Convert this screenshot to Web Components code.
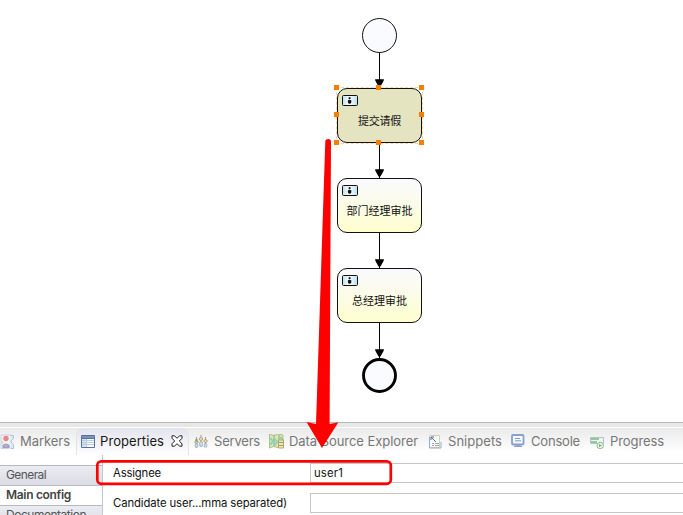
<!DOCTYPE html>
<html lang="zh"><head><meta charset="utf-8"><title>Process editor</title>
<style>html,body{margin:0;height:515px;overflow:hidden;background:#fff}</style></head>
<body><process-editor></process-editor>
<script>
const define=(name,html,after)=>customElements.define(name,class extends HTMLElement{
  connectedCallback(){
    if(this.shadowRoot)return;
    const t=document.createElement('template');t.innerHTML=html;
    this.attachShadow({mode:'open'}).append(t.content.cloneNode(true));
    if(after)after(this,this.shadowRoot);
  }
});

/* Text that spreads its letters to an intended width */
define('fit-label',`<style>:host{display:inline-block;white-space:nowrap}span{display:inline-block}</style><span></span>`,(h,r)=>{
  const s=r.querySelector('span');s.textContent=h.getAttribute('text');
  const w=+h.getAttribute('w');
  s.style.letterSpacing=((w-s.getBoundingClientRect().width)/s.textContent.length)+'px';
  h.style.width=w+'px';
});

define('flow-task',`<style>
:host{position:absolute;left:337px;width:83px;height:53px;box-sizing:content-box;border:1px solid #111;border-radius:10px;background:linear-gradient(#fafaff,#fefece);font:11px/14px "Noto Sans CJK SC",sans-serif;color:#111}
:host([selected]){background:#e5e4c1}
svg{position:absolute;left:4px;top:6px}
.t{position:absolute;left:0;right:0;top:24px;text-align:center}
i{position:absolute;width:5px;height:5px;background:#f77f00;display:none}
.f{position:absolute;inset:-2px;border:1px dashed #fbd3a8;display:none}
:host([selected]) i,:host([selected]) .f{display:block}
</style>
<svg width="16" height="12"><defs><linearGradient id="g"><stop stop-color="#b8e2f2"/><stop offset=".45" stop-color="#fff"/><stop offset="1" stop-color="#b8dff5"/></linearGradient></defs><rect x=".5" y=".5" width="15" height="10" rx="1" fill="url(#g)" stroke="#111" stroke-width="1"/><circle cx="7.6" cy="3.2" r="1.1" fill="#15202a"/><path d="M5.8 5.6q1.8-1.5 3.6 0l-.2 2L8.4 8.8H6.8L6 7.6z" fill="#111"/></svg>
<div class="t"></div><div class="f"></div>
<i style="left:-4px;top:-4px"></i><i style="left:38px;top:-4px"></i><i style="left:81px;top:-4px"></i><i style="left:-4px;top:23px"></i><i style="left:81px;top:23px"></i><i style="left:-4px;top:51px"></i><i style="left:38px;top:51px"></i><i style="left:81px;top:51px"></i>`,
(h,r)=>{h.style.top=h.getAttribute('y')+'px';const l=document.createElement('fit-label');l.setAttribute('text',h.getAttribute('name'));l.setAttribute('w',h.getAttribute('w'));r.querySelector('.t').append(l)});

define('flow-canvas',`<style>:host{display:block;position:relative;height:422px;background:#fff}svg.e{position:absolute;left:0;top:0}</style>
<svg class="e" width="683" height="422"><g stroke="#000" stroke-width="1"><path d="M379.5 52v36M379.5 143v35M379.5 233v35M379.5 323v36"/></g>
<g fill="#000"><path id="a" d="M375.3 79q2 .6 4.2 0 2.2.6 4.2 0v1.8l-3.2 5.7h-2l-3.2-5.7z"/><use href="#a" y="90"/><use href="#a" y="180"/><use href="#a" y="270"/></g>
<circle cx="379.5" cy="35.5" r="17" fill="#fafbff" stroke="#111" stroke-width="1"/><circle cx="379.5" cy="375.5" r="16" fill="#fafbff" stroke="#000" stroke-width="2.9"/></svg>
<flow-task y="88" name="提交请假" w="43" selected></flow-task><flow-task y="178" name="部门经理审批" w="66"></flow-task><flow-task y="268" name="总经理审批" w="55"></flow-task>`);

const icons={
markers:`<path d="M1 1h10.5v11L9 14.5H1z" fill="#f0f2fa" stroke="#c9d2e2"/><path d="M10.5 1.5h3v3l-3 3 3 3v4h-3" fill="#dbe9f7" stroke="#afc4d9"/><circle cx="6" cy="4.5" r="2.7" fill="#e98787"/><path d="m1.5 7 1.5 1.5L1.5 10" fill="none" stroke="#e3c795"/><path d="M2.5 14V11q3.5-3 7 0v3z" fill="#85a8d1"/><path d="M4.5 13v-2q1.5-1 3 0v2z" fill="#e7a1a1"/>`,
properties:`<path d="M.5 1.5h13v12H.5z" fill="#fff" stroke="#56739e"/><path d="M1 2h12v2H1z" fill="#7794bd"/><path d="M1 5h4v8H1z" fill="#d7e4f3"/><path d="M5.5 4v9M1 6.5h12M1 8.5h12M1 10.5h12" stroke="#b9cbe0"/><path d="M.5 4.5h13" stroke="#56739e"/>`,
servers:`<path d="M2.5 3v11M7 1v12M11.5 3v10" stroke="#98aabc" stroke-width="1.2"/><path d="M1 7h3v2H1zM5.5 4h3v2h-3zM10 6h3v2h-3z" fill="#fff" stroke="#bb8e48" stroke-width=".8"/><path d="M1.2 10h2.6v3H1.2zM5.7 8h2.6v4H5.7zM10.2 10h2.6v3h-2.6z" fill="#d6e5f0" stroke="#8ba8c0" stroke-width=".7"/><path d="M2.5 5v2.5" stroke="#6da36f" stroke-width="2"/>`,
data:`<path d="m.5 0 4 1.5L9 0l5 1v12l-5 .5-4.5-1L.5 14z" fill="#dbe7b0" stroke="#b7bd85"/><path d="M5 1v11M10 1v5" stroke="#7fae83"/><path d="m1 4 3 3-3 4M5 4l3 4-3 4m6-9 3 3" stroke="#8dd0bb" stroke-width="2" fill="none"/><path d="M9.5 6h5v8h-5z" fill="#f1e7bb" stroke="#b6a66e"/><path d="M10 8.5h4m-4 3h4" stroke="#a69866"/>`,
snippets:`<path d="M1.5 1.5h10v12h-10z" fill="#f5faff" stroke="#dacfb2"/><path d="M1.5 3v11h11.5V8" fill="none" stroke="#91acd0"/><path d="m3 3 5 5M3 6V3h3" stroke="#536d89" fill="none"/><path d="M4 9.5h2m-2 2h2" stroke="#d08b94"/><path d="M7 9.5h4m-4 2h4" stroke="#86b79c"/>`,
console:`<rect x="1" y="1" width="11.5" height="9.5" rx="1" fill="#f5f9ff" stroke="#86a0ca" stroke-width="1.8"/><path d="M4 4.5h5M4 6.8h6" stroke="#839ab9"/><path d="M5 11h4v1H5zM3 12.5h8" fill="#9baac1" stroke="#8ba2c5"/>`,
progress:`<path d="M.5 3.5h13v6H.5z" fill="#edf4f3" stroke="#b6bfc6"/><path d="M1 4h8v2H1zM1 7h6v2H1z" fill="#92c99a"/><circle cx="10.2" cy="11.5" r="3.2" fill="#eff9ed" stroke="#88bc8d"/><path d="m9 9.7 3 1.8-3 1.8z" fill="#77b77c"/>`};
define('view-tab',`<style>:host{display:flex;align-items:center;height:27px;box-sizing:border-box;padding-bottom:1px;color:#777;font:13px/18px Inter,"Noto Sans",sans-serif;flex:none}
:host([active]){color:#191919;background:linear-gradient(#e4e4ef,#fff);border:1px solid #e2e2e9;border-bottom:0;border-radius:8px 8px 0 0;padding-bottom:2px}
svg{flex:none;margin-right:5px}:host([active]) .i{margin-right:4px}.x{margin:0 0 0 7px;display:none}:host([active]) .x{display:block}</style><svg class="i" width="15" height="15"></svg><span></span><svg class="x" width="12" height="12"><path d="M1 .8h2.5L6 3.3 8.5.8H11v2.5L8.3 6 11 8.7v2.5H8.5L6 8.7l-2.5 2.5H1V8.7L3.7 6 1 3.3z" fill="#fff" stroke="#222"/></svg>`,(h,r)=>{
r.querySelector('.i').innerHTML=icons[h.getAttribute('icon')];const l=document.createElement('fit-label');l.setAttribute('text',h.getAttribute('name'));l.setAttribute('w',h.getAttribute('w'));r.querySelector('span').append(l);});

define('tab-bar',`<style>:host{display:grid;grid-template-columns:76px 113px 5px 75px 159px 83px 79px auto;height:28px;box-sizing:border-box;background:linear-gradient(#eaeaea,#fff 88%);border-top:1px solid #fff}
view-tab:first-child{padding-left:1px}view-tab[active]{padding-left:4px}</style>
<view-tab icon="markers" name="Markers" w="50"></view-tab><view-tab active icon="properties" name="Properties" w="64"></view-tab><b></b><view-tab icon="servers" name="Servers" w="46"></view-tab><view-tab icon="data" name="Data Source Explorer" w="129"></view-tab><view-tab icon="snippets" name="Snippets" w="54"></view-tab><view-tab icon="console" name="Console" w="49"></view-tab><view-tab icon="progress" name="Progress" w="54"></view-tab>`);

define('side-item',`<style>:host{display:block;box-sizing:border-box;height:20px;padding-left:6px;border-top:1px solid #b5b8c9;background:linear-gradient(#ebecf2,#dcdde4);font:12px/18px Inter,sans-serif;color:#555}:host([on]){background:#fff;font-weight:600;color:#444}</style><slot></slot>`);
define('prop-row',`<style>:host{display:grid;grid-template-columns:197px 1fr;height:19px;font:11.3px/20px Inter,sans-serif;color:#111}.v{border:1px solid #c5c5c5;border-right:0;box-sizing:border-box;padding-left:3px;line-height:18px}</style><div><slot></slot></div><div class="v"><slot name="value"></slot></div>`);
define('property-pane',`<style>:host{display:grid;grid-template-columns:103px 1fr;height:60px;overflow:hidden;background:#fff}
nav{padding-top:10px;border-right:1px solid #c3c7d7;height:71px;box-sizing:border-box;background:#fff}main{padding:8px 0 0 10px;display:flex;flex-direction:column;gap:11px}</style>
<nav><side-item><fit-label text="General" w="40"></fit-label></side-item><side-item on><fit-label text="Main config" w="65"></fit-label></side-item><side-item><fit-label text="Documentation" w="80"></fit-label></side-item></nav>
<main><prop-row><fit-label text="Assignee" w="48"></fit-label><fit-label slot="value" text="user1" w="29"></fit-label></prop-row><prop-row><fit-label text="Candidate user...mma separated)" w="174"></fit-label></prop-row></main>`);

define('red-annotation',`<style>:host{position:absolute;inset:0;pointer-events:none}svg{display:block}</style><svg width="683" height="515"><path d="M325.3 141.5q0-2.5 3-2.5 2.7 0 2.7 2.5l-1.4 282.5 8.8-1.8L322 448l-15.5-26 9.5 2z" fill="#f00"/><rect x="97.3" y="461.3" width="293.5" height="22.5" rx="4" fill="none" stroke="#f00" stroke-width="2.7"/></svg>`);
define('process-editor',`<style>:host{display:block;position:relative;width:683px;height:515px;overflow:hidden}.s{height:5px;box-sizing:border-box;border-top:1px solid #b9b9b9;background:#e7e7e7}</style><flow-canvas></flow-canvas><div class="s"></div><tab-bar></tab-bar><property-pane></property-pane><red-annotation></red-annotation>`);
</script></body></html>
